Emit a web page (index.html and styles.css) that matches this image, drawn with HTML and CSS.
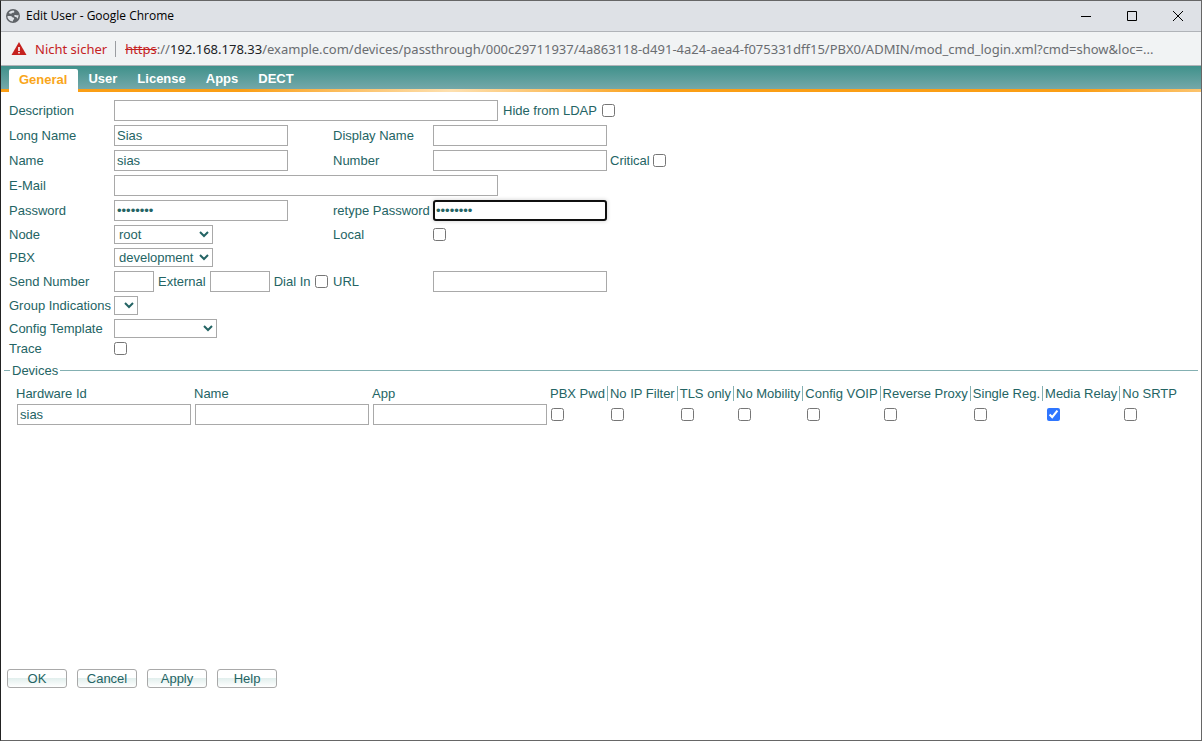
FILE: index.html
```html
<!DOCTYPE html>
<html lang="en">
<head>
  <meta charset="UTF-8">
  <title>Edit User - Google Chrome</title>
  <link rel="stylesheet" href="styles.css">
</head>
<body>
  <header class="titlebar">
    <svg class="globe" width="14" height="14" viewBox="0 0 14 14">
      <circle cx="7" cy="7" r="7" fill="#5f6368"/>
      <path d="M7.600 1.500C5 1.600 3.500 2.700 2.700 4c1 .2 1.500.8 2.500.6.900-.1 1.100-.9 2-.8.900.1 1.300-.5 1.100-1.200z" fill="#dee1e6"/>
      <path d="M1.400 7.200c1.200-.4 2.600-.4 3.800 0 1 .3 1.200 1.200 2 1.400.900.200 1.200.7.800 1.500-.3.700-1.200 1-1.100 2.300C3.800 12.300 1.500 10 1.400 7.200z" fill="#dee1e6"/>
      <path d="M12.400 5.800c-.8.800-1.800.5-2.700.2-.8-.3-1.700.2-1.500 1 .2.900 1.200.8 1.900 1 .8.200.6 1.300 1.300 1.700.8-1 1.300-2.400 1-3.900z" fill="#dee1e6"/>
    </svg>
    <span class="window-title">Edit User - Google Chrome</span>
    <div class="window-buttons">
      <button aria-label="Minimize"><svg width="10" height="10" viewBox="0 0 10 10"><path d="M0 5.500h10"/></svg></button>
      <button aria-label="Maximize"><svg width="10" height="10" viewBox="0 0 10 10"><path d="M.5.5h9v9h-9z"/></svg></button>
      <button aria-label="Close"><svg width="10" height="10" viewBox="0 0 10 10"><path d="M0 0l10 10M10 0L0 10"/></svg></button>
    </div>
  </header>

  <div class="addressbar">
    <svg class="warning" width="16" height="14" viewBox="0 0 16 14">
      <path d="M8 0l7.500 13H.5z" fill="#c5221f"/>
      <path d="M7.200 5h1.600v4H7.200zM7.200 10h1.600v1.500H7.200z" fill="#fff"/>
    </svg>
    <span class="insecure">Nicht sicher</span>
    <span class="url"><s>https</s>://<b>192.168.178.33</b>/example.com/devices/passthrough/000c29711937/4a863118-d491-4a24-aea4-f075331dff15/PBX0/ADMIN/mod_cmd_login.xml?cmd=show&amp;loc=...</span>
  </div>

  <nav class="tabs">
    <a href="#general" class="active">General</a>
    <a href="#user">User</a>
    <a href="#license">License</a>
    <a href="#apps">Apps</a>
    <a href="#dect">DECT</a>
  </nav>

  <form class="edit-user">
    <div class="fields">
      <label for="description">Description</label>
      <div class="wide">
        <input type="text" id="description" class="long">
        <label for="hide-ldap">Hide from LDAP</label>
        <input type="checkbox" id="hide-ldap">
      </div>

      <label for="long-name">Long Name</label>
      <div><input type="text" id="long-name" value="Sias"></div>
      <label for="display-name">Display Name</label>
      <div><input type="text" id="display-name"></div>

      <label for="name">Name</label>
      <div><input type="text" id="name" value="sias"></div>
      <label for="number">Number</label>
      <div class="tight">
        <input type="text" id="number">
        <label for="critical">Critical</label>
        <input type="checkbox" id="critical">
      </div>

      <label for="email">E-Mail</label>
      <div class="wide"><input type="text" id="email" class="long"></div>

      <label for="password">Password</label>
      <div><input type="password" id="password" value="password"></div>
      <label for="password2">retype Password</label>
      <div><input type="password" id="password2" value="password" autofocus></div>

      <label for="node">Node</label>
      <div><select id="node"><option>root</option></select></div>
      <label for="local">Local</label>
      <div><input type="checkbox" id="local"></div>

      <label for="pbx">PBX</label>
      <div class="wide"><select id="pbx"><option>development</option></select></div>

      <label for="send-number">Send Number</label>
      <div>
        <input type="text" id="send-number" class="short">
        <label for="external">External</label>
        <input type="text" id="external" class="medium">
        <label for="dial-in">Dial In</label>
        <input type="checkbox" id="dial-in">
      </div>
      <label for="url">URL</label>
      <div><input type="text" id="url"></div>

      <label for="group-ind">Group Indications</label>
      <div class="wide"><select id="group-ind" class="empty"></select></div>

      <label for="template">Config Template</label>
      <div class="wide"><select id="template" class="template"><option></option></select></div>

      <label for="trace">Trace</label>
      <div class="wide"><input type="checkbox" id="trace"></div>
    </div>

    <fieldset>
      <legend>Devices</legend>
      <table class="devices">
        <tr>
          <th class="text">Hardware Id</th>
          <th class="text">Name</th>
          <th class="text">App</th>
          <th>PBX Pwd</th>
          <th>No IP Filter</th>
          <th>TLS only</th>
          <th>No Mobility</th>
          <th>Config VOIP</th>
          <th>Reverse Proxy</th>
          <th>Single Reg.</th>
          <th>Media Relay</th>
          <th>No SRTP</th>
        </tr>
        <tr>
          <td class="text"><input type="text" aria-label="Hardware Id" value="sias"></td>
          <td class="text"><input type="text" aria-label="Name"></td>
          <td class="text"><input type="text" aria-label="App"></td>
          <td><input type="checkbox" aria-label="PBX Pwd"></td>
          <td><input type="checkbox" aria-label="No IP Filter"></td>
          <td><input type="checkbox" aria-label="TLS only"></td>
          <td><input type="checkbox" aria-label="No Mobility"></td>
          <td><input type="checkbox" aria-label="Config VOIP"></td>
          <td><input type="checkbox" aria-label="Reverse Proxy"></td>
          <td><input type="checkbox" aria-label="Single Reg."></td>
          <td><input type="checkbox" aria-label="Media Relay" checked></td>
          <td><input type="checkbox" aria-label="No SRTP"></td>
        </tr>
      </table>
    </fieldset>

    <div class="actions">
      <button type="submit">OK</button>
      <button type="button">Cancel</button>
      <button type="button">Apply</button>
      <button type="button">Help</button>
    </div>
  </form>
</body>
</html>
```

FILE: styles.css
```css
* {
  box-sizing: border-box;
}
body {
  display: flex;
  flex-direction: column;
  min-height: 100vh;
  margin: 0;
  border: 1px solid #666;
  border-left-color: #222;
  background: #fff;
  color: #246464;
  font: 13px/15px "Liberation Sans", Arial, sans-serif;
}

/* browser window */
.titlebar {
  display: flex;
  align-items: center;
  height: 31px;
  padding-left: 5px;
  background: #dee1e6;
  border-bottom: 1px solid #b0b3b8;
  color: #000;
  font: 12px/16px "Open Sans", "Noto Sans", sans-serif;
}
.window-title {
  margin-left: 6px;
}
.window-buttons {
  display: flex;
  margin-left: auto;
}
.window-buttons button {
  display: flex;
  align-items: center;
  justify-content: center;
  width: 46px;
  height: 28px;
  padding: 0;
  border: 0;
  background: none;
}
.window-buttons path {
  fill: none;
  stroke: #000;
}
.addressbar {
  display: flex;
  align-items: center;
  height: 34px;
  padding: 0 20px 0 10px;
  background: #f1f3f4;
  border-bottom: 1px solid #b0b3b8;
  color: #6a6d71;
  font: 13px/20px "Noto Sans", "Open Sans", sans-serif;
  white-space: nowrap;
}
.warning {
  flex-shrink: 0;
}
.insecure {
  margin-left: 8px;
  padding-right: 8px;
  color: #c5221f;
}
.url {
  padding-left: 9px;
  border-left: 1px solid #9a9da1;
  line-height: 16px;
}
.url s {
  color: #c5221f;
}
.url b {
  color: #202124;
  font-weight: normal;
}

/* tabs */
.tabs {
  display: flex;
  align-items: flex-end;
  height: 26px;
  padding: 0 8px;
  background:
    repeating-linear-gradient(90deg, #fa9e15 0, #fa9e15 240px, #fde0b0 450px, #fa9e15 660px, #fa9e15 840px) bottom / 100% 3px no-repeat,
    linear-gradient(#3f918b, #7babad);
}
.tabs a {
  height: 23px;
  padding: 2px 10px 0;
  color: #fff;
  font-weight: bold;
  line-height: 15px;
  text-decoration: none;
}
.tabs a.active {
  padding: 3px 11px 0 10px;
  border-radius: 2px 2px 0 0;
  background: #fff;
  color: #f9a61a;
}

/* form */
.edit-user {
  display: flex;
  flex: 1;
  flex-direction: column;
  padding: 8px 3px 52px;
}
.fields {
  display: grid;
  grid-template-columns: 105px 219px 100px 1fr;
  align-items: center;
  row-gap: 4px;
  padding-left: 5px;
  line-height: 13px;
  white-space: nowrap;
}
.fields > div {
  display: flex;
  align-items: center;
  gap: 4px;
}
.fields > .tight {
  gap: 3px;
}
.fields > .wide {
  grid-column: span 3;
  gap: 5px;
}
input,
select,
.actions button {
  margin: 0;
  color: #246464;
  font: inherit;
}
input[type=text],
input[type=password] {
  width: 174px;
  height: 21px;
  padding: 1px 2px;
  border: 1px solid #a9a9a9;
}
input[type=password]:focus {
  padding: 0 1px;
  border: 2px solid #101010;
  border-radius: 3px;
  outline: 0;
  box-shadow: 0 0 4px #ccc;
}
input[type=checkbox] {
  width: 13px;
  height: 13px;
  accent-color: #2f76ff;
}
input.long {
  width: 384px;
}
input.short {
  width: 40px;
}
input.medium {
  width: 60px;
}
select {
  width: 99px;
  height: 19px;
  border: 1px solid #a9a9a9;
  border-radius: 0;
  background: #fff;
}
select.empty {
  width: 24px;
}
select.template {
  width: 103px;
}

/* devices */
fieldset {
  margin: 8px 0 0;
  padding: 8px 12px;
  border: 0;
  border-top: 1px solid #84b0b2;
}
legend {
  margin-left: -6px;
  padding: 0 2px;
}
.devices {
  border-collapse: collapse;
  white-space: nowrap;
}
.devices th {
  padding: 0 2px;
  border-left: 1px solid #84b0b2;
  font-weight: normal;
  text-align: left;
}
.devices th.text {
  width: 178px;
}
.devices th.text,
.devices .text + th {
  padding-left: 0;
  border-left: 0;
}
.devices td {
  padding: 3px 0 0 4px;
}
.devices td.text,
.devices .text + td {
  padding-left: 1px;
}
.devices td input {
  display: block;
}

/* buttons */
.actions {
  display: flex;
  gap: 10px;
  margin-top: auto;
  padding-left: 3px;
}
.actions button {
  width: 60px;
  height: 19px;
  padding: 0;
  border: 1px solid #a9a9a9;
  border-radius: 3px;
  background: linear-gradient(#fff 45%, #e0eeec 45%, #fff);
}
```
